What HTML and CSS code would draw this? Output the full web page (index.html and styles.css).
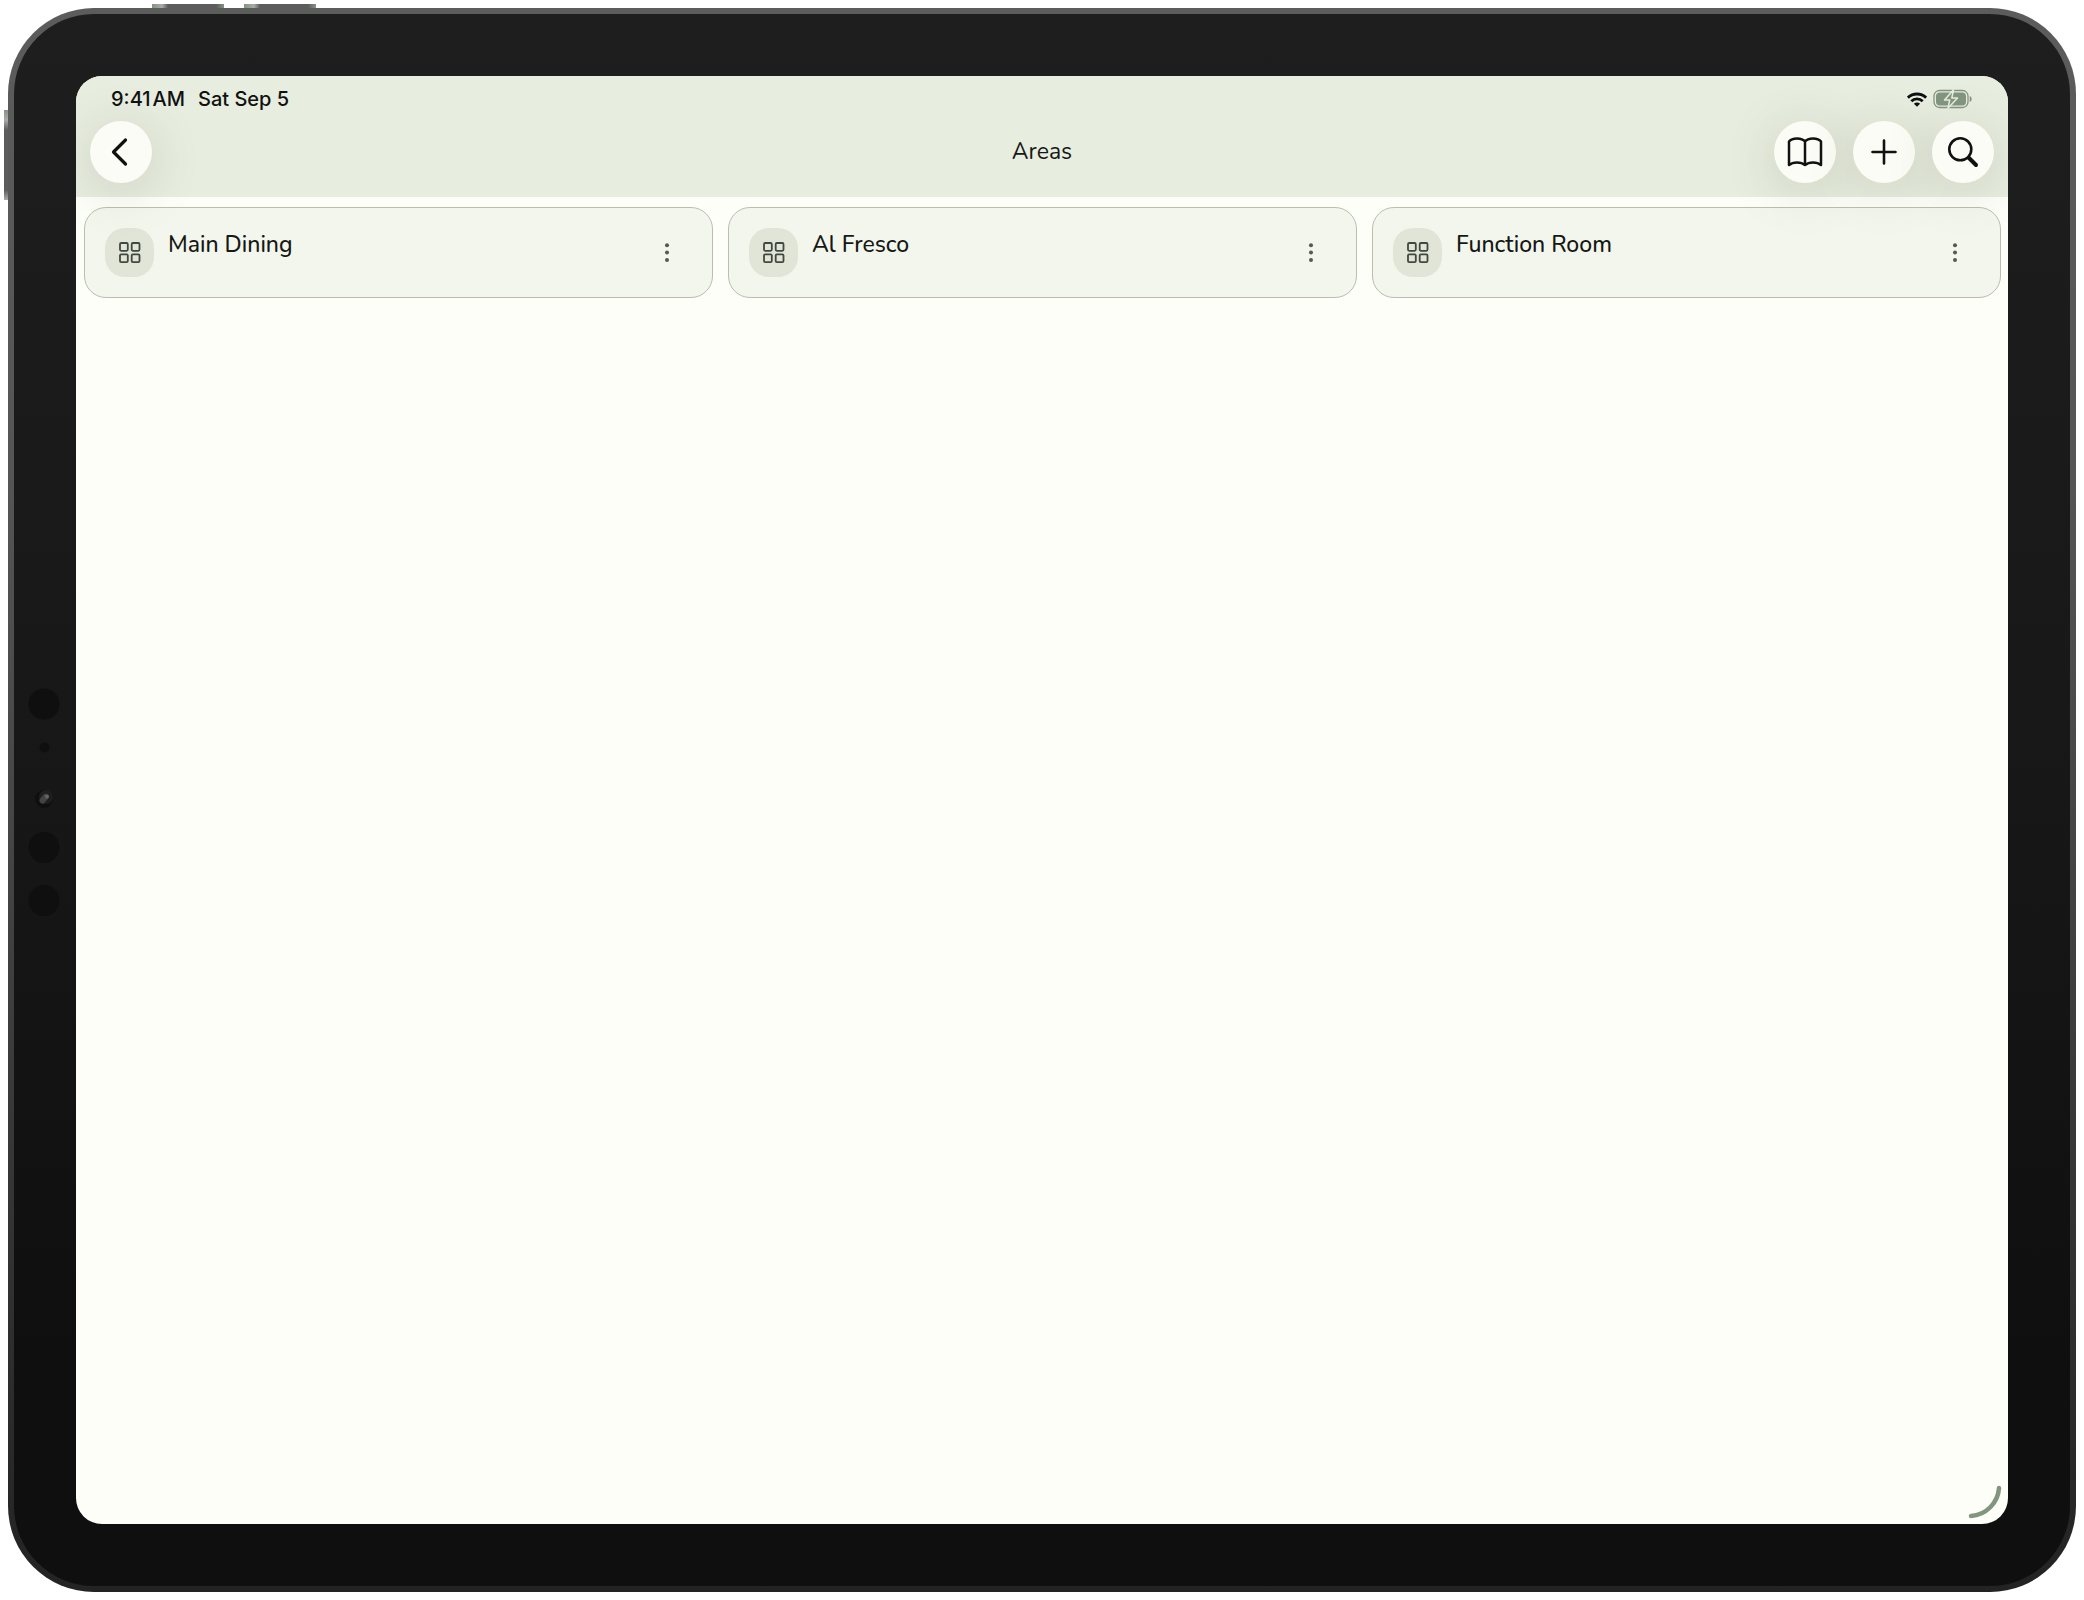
FILE: index.html
```html
<!DOCTYPE html>
<html lang="en">
<head>
<meta charset="utf-8">
<meta name="viewport" content="width=device-width, initial-scale=1">
<title>Areas</title>
<link rel="stylesheet" href="styles.css">
</head>
<body>
<svg class="defs" aria-hidden="true">
  <symbol id="grid" viewBox="0 0 22 22">
    <g fill="none" stroke="currentColor" stroke-width="1.8">
      <rect x="1" y="1" width="7.800" height="7.800" rx="1.200"/>
      <rect x="12.700" y="1" width="7.800" height="7.800" rx="1.200"/>
      <rect x="1" y="12.300" width="7.800" height="7.800" rx="1.200"/>
      <rect x="12.700" y="12.300" width="7.800" height="7.800" rx="1.200"/>
    </g>
  </symbol>
  <symbol id="dots" viewBox="0 0 6 20">
    <g fill="currentColor"><circle cx="3" cy="2.300" r="2"/><circle cx="3" cy="9.600" r="2"/><circle cx="3" cy="17" r="2"/></g>
  </symbol>
</svg>
<div class="device">
  <span class="key key-volume-up"></span>
  <span class="key key-volume-down"></span>
  <span class="key key-power"></span>
  <svg class="sensors" viewBox="0 0 36 260" aria-hidden="true">
    <g fill="#0f0f0f">
      <circle cx="18" cy="33" r="15.500"/><circle cx="18.500" cy="76.500" r="5"/>
      <circle cx="18" cy="128" r="9"/><circle cx="18" cy="176.500" r="15.500"/><circle cx="18" cy="229.500" r="15.500"/>
    </g>
    <circle cx="20" cy="126" r="7" fill="#1e1e1e"/>
    <path d="M16.500 129.500l3-3.500" stroke="#444" stroke-width="6" stroke-linecap="round"/>
    <circle cx="21" cy="125.500" r="2" fill="#666"/>
  </svg>
  <div class="screen">
    <header class="header">
      <div class="status">
        <span class="clock">9:41<span class="meridiem">AM</span></span>
        <span class="date">Sat Sep 5</span>
        <svg class="wifi" viewBox="0 0 20 15" role="img" aria-label="Wi-Fi">
          <g fill="none" stroke="#111" stroke-width="2.800">
            <path d="M.9 5.700a13 13 0 0 1 18.200 0"/><path d="M4.300 9.300a8.100 8.100 0 0 1 11.400 0"/>
          </g>
          <path d="M10 14.700L6.900 11.700a4.400 4.400 0 0 1 6.200 0z" fill="#111"/>
        </svg>
        <svg class="battery" viewBox="0 0 39 20" role="img" aria-label="Battery charging">
          <rect x="1" y="1.500" width="34" height="17" rx="5.500" fill="none" stroke="#82957f" stroke-width="1.300"/>
          <rect x="3" y="3.500" width="30" height="13" rx="3.800" fill="#82957f"/>
          <path d="M36.700 7q2 .7 2 3t-2 3z" fill="#82957f"/>
          <path d="M20.500 .8L11.500 11h5.200L15 19.200 24.500 9h-5.700z" fill="#82957f" stroke="#e7eddf" stroke-width="1.500" stroke-linejoin="round"/>
        </svg>
      </div>
      <div class="toolbar">
        <div class="actions">
          <button class="round" type="button" aria-label="Back">
            <svg viewBox="0 0 36 36"><path d="M22.500 6L10.500 18 22.500 30" stroke-width="3.200"/></svg>
          </button>
        </div>
        <h1 class="title">Areas</h1>
        <div class="actions actions-end">
          <button class="round" type="button" aria-label="Guide">
            <svg viewBox="0 0 36 36"><path d="M18 7.500C15 3.500 5 3.500 2 7.500V31C6 27.500 14 27.500 18 31C22 27.500 30 27.500 34 31V7.500C31 3.500 21 3.500 18 7.500V31" stroke-width="2.500"/></svg>
          </button>
          <button class="round" type="button" aria-label="Add area">
            <svg viewBox="0 0 36 36"><path d="M18 6.500V29.500M6.500 18H29.500" stroke-width="2.600"/></svg>
          </button>
          <button class="round" type="button" aria-label="Search">
            <svg viewBox="0 0 36 36"><circle cx="15.300" cy="15.300" r="11" stroke-width="2.600"/><path d="M24 24L31 31" stroke-width="4"/></svg>
          </button>
        </div>
      </div>
    </header>
    <main class="areas">
      <article class="card">
        <span class="badge"><svg><use href="#grid"/></svg></span>
        <h2 class="name">Main Dining</h2>
        <button class="more" type="button" aria-label="Main Dining options"><svg><use href="#dots"/></svg></button>
      </article>
      <article class="card">
        <span class="badge"><svg><use href="#grid"/></svg></span>
        <h2 class="name">Al Fresco</h2>
        <button class="more" type="button" aria-label="Al Fresco options"><svg><use href="#dots"/></svg></button>
      </article>
      <article class="card">
        <span class="badge"><svg><use href="#grid"/></svg></span>
        <h2 class="name">Function Room</h2>
        <button class="more" type="button" aria-label="Function Room options"><svg><use href="#dots"/></svg></button>
      </article>
    </main>
    <svg class="corner" viewBox="0 0 34 34" aria-hidden="true"><path d="M3 31A30 30 0 0 0 31 3" fill="none" stroke="#82957f" stroke-width="4.500" stroke-linecap="round"/></svg>
  </div>
</div>
</body>
</html>
```
FILE: styles.css
```css
* {
  box-sizing: border-box;
}

body {
  margin: 0;
  padding: 8px;
  background: #fff;
  color: #151815;
  font-family: Nunito, "Open Sans", sans-serif;
}

h1,
h2 {
  margin: 0;
  font-weight: 400;
}

button {
  padding: 0;
  border: 0;
  color: inherit;
}

.defs {
  position: absolute;
  width: 0;
  height: 0;
}

/* Tablet body */
.device {
  position: relative;
  display: flex;
  min-height: calc(100vh - 16px);
  padding: 62px;
  border: 6px solid transparent;
  border-radius: 86px;
  background:
    linear-gradient(#1e1e1e, #171717 50%, #0f0f0f 85%) padding-box,
    linear-gradient(#5c5c5c, #555 30%, #3c3c3c 65%, #232323) border-box;
}

.key {
  position: absolute;
  background: linear-gradient(90deg, #82957f, #aaa 10px, #5c5c5c 16px, #5c5c5c 64px, #82957f);
}

.key-volume-up,
.key-volume-down {
  top: -10px;
  width: 72px;
  height: 4px;
}

.key-volume-up {
  left: 138px;
}

.key-volume-down {
  left: 230px;
}

.key-power {
  top: 96px;
  left: -10px;
  width: 4px;
  height: 90px;
  background: linear-gradient(#82957f, #aaa 10px, #5c5c5c 20px, #5c5c5c 80px, #aaa);
}

.sensors {
  position: absolute;
  top: 50%;
  left: 12px;
  width: 36px;
  height: 260px;
  margin-top: -129px;
}

.screen {
  position: relative;
  display: flex;
  flex: 1;
  flex-direction: column;
  overflow: hidden;
  border-radius: 26px;
  background: #fdfef8;
}

/* Status bar and toolbar */
.header {
  position: relative;
  z-index: 1;
  padding: 10px 14px 14px;
  background: #e7eddf;
}

.status {
  display: flex;
  align-items: center;
  height: 26px;
  padding: 0 22px 0 21px;
  color: #111;
  font: 500 20px/26px Inter, sans-serif;
}

.clock {
  display: flex;
  gap: 2px;
}

.date {
  margin-left: 13px;
}

.wifi {
  width: 20px;
  height: 15px;
  margin-left: auto;
}

.battery {
  width: 39px;
  height: 20px;
  margin-left: 6px;
}

.toolbar {
  display: grid;
  grid-template-columns: 1fr auto 1fr;
  align-items: center;
  margin-top: 9px;
}

.actions {
  display: flex;
  gap: 17px;
}

.actions-end {
  justify-content: flex-end;
}

.title {
  font-size: 23px;
  line-height: 32px;
}

.round {
  display: grid;
  place-items: center;
  width: 62px;
  height: 62px;
  border-radius: 50%;
  background: #fbfcf5;
  box-shadow: 0 8px 48px rgba(110, 110, 80, 0.22);
}

.round svg {
  width: 36px;
  height: 36px;
  fill: none;
  stroke: #111;
  stroke-linecap: round;
  stroke-linejoin: round;
}

/* Area cards */
.areas {
  display: grid;
  grid-template-columns: repeat(3, 1fr);
  gap: 15px;
  padding: 10px 7px 10px 8px;
}

.card {
  display: flex;
  align-items: flex-start;
  padding: 20px;
  border: 1px solid #b9beaf;
  border-radius: 22px;
  background: #f3f6ec;
}

.badge {
  display: grid;
  place-items: center;
  width: 49px;
  height: 49px;
  border-radius: 20px;
  background: #e0e5d8;
  color: #414840;
}

.badge svg {
  width: 22px;
  height: 22px;
}

.name {
  flex: 1;
  margin-left: 14px;
  font-size: 23px;
  font-weight: 500;
  line-height: 34px;
}

.more {
  display: grid;
  place-items: center;
  width: 50px;
  height: 49px;
  background: none;
  color: #525b50;
}

.more svg {
  width: 6px;
  height: 20px;
}

.corner {
  position: absolute;
  right: 6px;
  bottom: 5px;
  width: 34px;
  height: 34px;
}
```
